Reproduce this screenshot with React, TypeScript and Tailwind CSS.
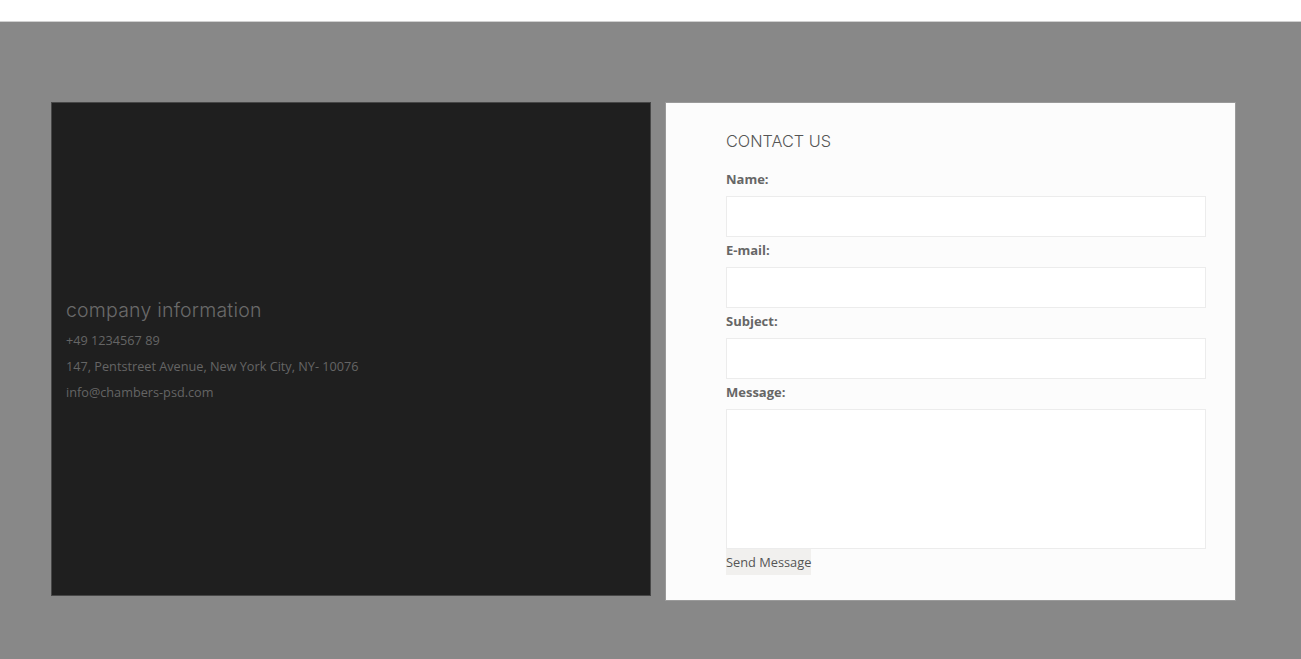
import React from 'react';

const infoLines = [
  '+49 1234567 89',
  '147, Pentstreet Avenue, New York City, NY- 10076',
  'info@chambers-psd.com',
];

const fields = [
  { label: 'Name:', type: 'text' },
  { label: 'E-mail:', type: 'email' },
  { label: 'Subject:', type: 'text' },
];

const App: React.FC = () => (
  <div className="min-h-[659px] bg-white font-['Open_Sans',sans-serif]">
    <div className="h-[22px] bg-white border-b border-[#d0d0d0]" />
    <div className="bg-[#888888] min-h-[637px] pt-[80px] pl-[51px] flex items-start gap-[14px]">
      {/* company info */}
      <div className="w-[600px] h-[494px] bg-[#1f1f1f] border border-[#474747] pt-[195px] pl-[14px]">
        <h3 className="font-['Inter',sans-serif] text-[19.5px] leading-[24px] text-[#6a6a6a] font-light tracking-[0.2px]">
          company information
        </h3>
        <div className="mt-[5px]">
          {infoLines.map(line => (
            <p key={line} className="text-[12.7px] leading-[26px] text-[#656565]">{line}</p>
          ))}
        </div>
      </div>

      {/* contact form */}
      <div className="w-[571px] h-[499px] bg-[#fcfcfc] border border-[#9a9a9a] pt-[28px] pl-[60px]">
        <h2 className="font-['Inter',sans-serif] text-[16.3px] leading-[20px] text-[#555555] font-light">
          CONTACT US
        </h2>
        <form className="mt-[18px] w-[480px]" onSubmit={e => e.preventDefault()}>
          {fields.map(f => (
            <div key={f.label}>
              <label className="block h-5 leading-5 mb-[7px] text-[13px] font-bold text-[#666666]">{f.label}</label>
              <input type={f.type} className="block w-[480px] h-[41px] mb-[3px] bg-white border border-[#ececec] outline-none" />
            </div>
          ))}
          <label className="block h-5 leading-5 mb-[7px] text-[13px] font-bold text-[#666666]">Message:</label>
          <textarea className="block w-[480px] h-[140px] bg-white border border-[#ececec] outline-none resize-none" />
          <button type="submit" className="h-[26px] px-0 bg-[#f1f0ee] text-[12.8px] text-[#555555] leading-[26px] whitespace-nowrap">
            Send Message
          </button>
        </form>
      </div>
    </div>
  </div>
);

export default App;
